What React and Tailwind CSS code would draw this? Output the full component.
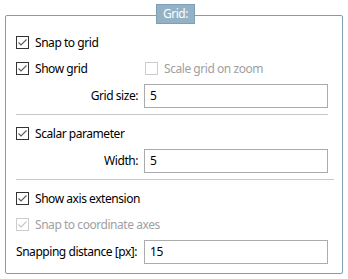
import React from "react";

function Check({ checked = true, disabled = false }) {
  return (
    <span
      className={`w-[13px] h-[13px] border bg-white flex items-center justify-center shrink-0 ${
        disabled ? "border-[#cccccc]" : "border-[#333333]"
      }`}
    >
      {checked && (
        <svg width="11" height="11" viewBox="0 0 11 11">
          <path
            d="M1.5 5.5 L4 8 L9.5 2.5"
            fill="none"
            stroke={disabled ? "#c6c6c6" : "#5a5a5a"}
            strokeWidth="1.1"
          />
        </svg>
      )}
    </span>
  );
}

function CheckRow({ label, checked = true, disabled = false, className = "" }) {
  return (
    <div className={`flex items-center h-[13px] ${className}`}>
      <Check checked={checked} disabled={disabled} />
      <span
        className={`ml-[6px] text-[12px] leading-none whitespace-nowrap ${
          disabled ? "text-[#a0a0a0]" : "text-black"
        }`}
      >
        {label}
      </span>
    </div>
  );
}

function InputRow({ label, value, className = "", labelRight = true }) {
  return (
    <div className={`flex items-center h-[24px] ${className}`}>
      <div
        className={`w-[128px] pr-[6px] text-[12px] text-black whitespace-nowrap ${
          labelRight ? "text-right" : "text-left"
        }`}
      >
        {label}
      </div>
      <div className="w-[184px] h-[24px] border border-[#ababab] bg-white flex items-center pl-[5px] text-[12px] text-black">
        {value}
      </div>
    </div>
  );
}

export default function App() {
  return (
    <div
      className="w-[348px] h-[279px] bg-white relative overflow-hidden tracking-[-0.45px]"
      style={{ fontFamily: '"Noto Sans", "Open Sans", Arial, sans-serif' }}
    >
      <div className="absolute left-[156px] top-[4px] w-[39px] h-[20px] bg-[#94b2c7] border border-[#7f9fb5] text-white text-[12px] flex items-center justify-center z-10">
        Grid:
      </div>
      <div className="ml-[5px] mt-[15px] w-[338px] h-[259px] border border-[#7a9fb7] rounded-[2px] pl-[10px] flex flex-col">
        <CheckRow label="Snap to grid" className="mt-[20px]" />
        <div className="flex items-center mt-[13px]">
          <CheckRow label="Show grid" className="w-[129px]" />
          <CheckRow label="Scale grid on zoom" checked={false} disabled />
        </div>
        <InputRow label="Grid size:" value="5" className="mt-[9px]" />
        <div className="mt-[6px] w-[312px] h-px bg-[#c8c8c8]" />
        <CheckRow label="Scalar parameter" className="mt-[12px]" />
        <InputRow label="Width:" value="5" className="mt-[9px]" />
        <div className="mt-[6px] w-[318px] h-px bg-[#c8c8c8]" />
        <CheckRow label="Show axis extension" className="mt-[12px]" />
        <CheckRow label="Snap to coordinate axes" disabled className="mt-[13px]" />
        <InputRow
          label="Snapping distance [px]:"
          value="15"
          labelRight={false}
          className="mt-[9px]"
        />
      </div>
    </div>
  );
}
